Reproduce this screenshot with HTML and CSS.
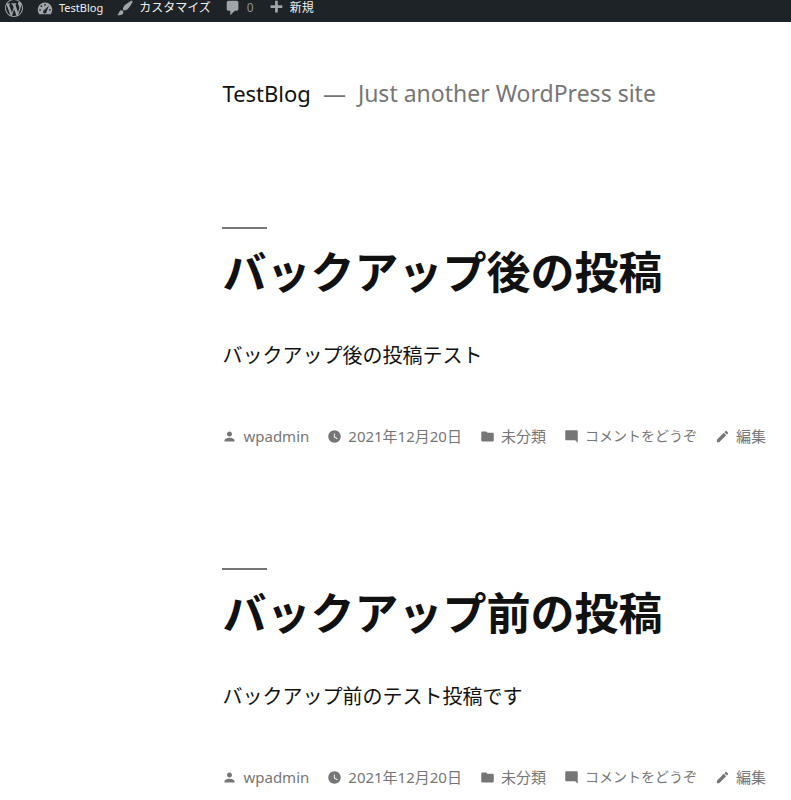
FILE: index.html
```html
<!DOCTYPE html>
<html lang="ja">
  <head>
    <meta charset="UTF-8" />
    <meta name="viewport" content="width=device-width, initial-scale=1" />
    <title>TestBlog</title>
    <link rel="stylesheet" href="styles.css">
  </head>
  <body>
    <!-- shared icons -->
    <svg class="sprite" aria-hidden="true">
      <symbol id="icon-person" viewBox="0 0 24 24"><path d="M12 12c2.21 0 4-1.79 4-4s-1.79-4-4-4-4 1.79-4 4 1.79 4 4 4zm0 2c-2.67 0-8 1.34-8 4v2h16v-2c0-2.66-5.33-4-8-4z" /></symbol>
      <symbol id="icon-clock" viewBox="0 0 24 24"><path d="M12 2C6.5 2 2 6.500 2 12s4.500 10 10 10 10-4.500 10-10S17.500 2 12 2zm4.200 14.200L11 13V7h1.500v5.200l4.500 2.700-.8 1.300z" /></symbol>
      <symbol id="icon-folder" viewBox="0 0 24 24"><path d="M10 4H4c-1.100 0-1.990.9-1.990 2L2 18c0 1.100.9 2 2 2h16c1.100 0 2-.9 2-2V8c0-1.100-.9-2-2-2h-8l-2-2z" /></symbol>
      <symbol id="icon-comment" viewBox="0 0 24 24"><path d="M21.990 4c0-1.100-.89-2-1.990-2H4c-1.100 0-2 .9-2 2v12c0 1.100.9 2 2 2h14l4 4-.01-18z" /></symbol>
      <symbol id="icon-edit" viewBox="0 0 24 24"><path d="M3 17.250V21h3.750L17.810 9.940l-3.750-3.750L3 17.250zM20.710 7.040c.39-.39.39-1.020 0-1.410l-2.340-2.340c-.39-.39-1.020-.39-1.410 0l-1.830 1.830 3.750 3.750 1.830-1.830z" /></symbol>
    </svg>

    <nav class="adminbar" aria-label="ツールバー">
      <a href="#" aria-label="WordPress">
        <svg class="bar-icon" viewBox="0 0 20 20"><path d="M20 10c0-5.510-4.490-10-10-10C4.480 0 0 4.490 0 10c0 5.520 4.480 10 10 10 5.510 0 10-4.480 10-10zM7.780 15.370L4.370 6.220c.55-.02 1.170-.08 1.170-.08.5-.06.44-1.130-.06-1.110 0 0-1.450.11-2.370.11-.18 0-.37 0-.58-.01C4.120 2.690 6.870 1.110 10 1.110c2.330 0 4.450.87 6.050 2.340-.68-.11-1.650.39-1.650 1.580 0 .74.45 1.360.9 2.100.35.61.55 1.360.55 2.460 0 1.490-1.400 5-1.400 5l-3.030-8.370c.54-.02.82-.17.82-.17.5-.05.44-1.250-.06-1.220 0 0-1.440.12-2.380.12-.87 0-2.330-.12-2.330-.12-.5-.03-.56 1.200-.06 1.220l.92.08 1.260 3.410zM17.410 10c.24-.64.74-1.870.43-4.250.7 1.290 1.050 2.710 1.050 4.250 0 3.290-1.730 6.240-4.400 7.780.97-2.590 1.940-5.200 2.920-7.780zM6.100 18.090C3.120 16.650 1.110 13.530 1.110 10c0-1.300.23-2.480.72-3.590C3.250 10.300 4.670 14.200 6.100 18.090zm4.030-6.630l2.580 6.980c-.86.29-1.760.45-2.710.45-.79 0-1.570-.11-2.290-.33.81-2.380 1.620-4.740 2.420-7.100z" /></svg>
      </a>
      <a href="#" class="bar-site">
        <svg class="bar-icon" viewBox="0 0 20 20">
          <path d="M3.760 17h12.480C17.340 15.630 18 13.890 18 12c0-4.410-3.580-8-8-8s-8 3.590-8 8c0 1.890.66 3.630 1.760 5z" />
          <g class="bar-cut">
            <circle cx="10" cy="6.500" r="1" />
            <circle cx="6" cy="8" r="1" />
            <circle cx="4.500" cy="12" r="1" />
            <circle cx="15.500" cy="12" r="1" />
            <path d="M14.500 7.200l-2.700 6.500a2 2 0 1 1-2.500-1.500z" />
          </g>
        </svg>
        TestBlog
      </a>
      <a href="#">
        <svg class="bar-icon" viewBox="0 0 20 20"><path d="M18.330 3.570s.27-.8-.31-1.360c-.53-.52-1.220-.24-1.220-.24-.61.3-5.760 3.470-7.670 5.570-.86.96-2.060 3.790-1.090 4.820.92.98 3.960-.17 4.790-1 2.060-2.060 5.210-7.170 5.500-7.790zM1.400 17.650c2.370-1.560 1.460-3.410 3.230-4.640.93-.65 2.220-.62 3.080.29.63.67.8 2.570-.16 3.460-1.570 1.450-4 1.550-6.150.89z" /></svg>
        カスタマイズ
      </a>
      <a href="#" class="bar-comments">
        <svg class="bar-icon" viewBox="0 0 20 20"><path d="M5 2h9c1.100 0 2 .9 2 2v7c0 1.100-.9 2-2 2h-2l-5 5v-5H5c-1.100 0-2-.9-2-2V4c0-1.100.9-2 2-2z" /></svg>
        0
      </a>
      <a href="#">
        <svg class="bar-icon" viewBox="0 0 20 20"><path d="M17 7v3h-5v5H9v-5H4V7h5V2h3v5h5z" /></svg>
        新規
      </a>
    </nav>

    <div class="site">
      <header class="site-header">
        <a href="#" class="site-title">TestBlog</a>
        <span>—</span>
        <span>Just another WordPress site</span>
      </header>

      <main>
        <article class="entry">
          <h2 class="entry-title"><a href="#">バックアップ後の投稿</a></h2>
          <p class="entry-content">バックアップ後の投稿テスト</p>
          <footer class="entry-footer">
            <a href="#"><svg><use href="#icon-person" /></svg>wpadmin</a>
            <a href="#"><svg><use href="#icon-clock" /></svg><time datetime="2021-12-20">2021年12月20日</time></a>
            <a href="#"><svg><use href="#icon-folder" /></svg>未分類</a>
            <a href="#" class="comments-link"><svg><use href="#icon-comment" /></svg>コメントをどうぞ</a>
            <a href="#"><svg><use href="#icon-edit" /></svg>編集</a>
          </footer>
        </article>

        <article class="entry">
          <h2 class="entry-title"><a href="#">バックアップ前の投稿</a></h2>
          <p class="entry-content">バックアップ前のテスト投稿です</p>
          <footer class="entry-footer">
            <a href="#"><svg><use href="#icon-person" /></svg>wpadmin</a>
            <a href="#"><svg><use href="#icon-clock" /></svg><time datetime="2021-12-20">2021年12月20日</time></a>
            <a href="#"><svg><use href="#icon-folder" /></svg>未分類</a>
            <a href="#" class="comments-link"><svg><use href="#icon-comment" /></svg>コメントをどうぞ</a>
            <a href="#"><svg><use href="#icon-edit" /></svg>編集</a>
          </footer>
        </article>
      </main>
    </div>
  </body>
</html>
```
FILE: styles.css
```css
* {
  box-sizing: border-box;
}
body {
  margin: 0;
  background: #fff;
  color: #111;
  font-family: "Noto Sans", "Noto Sans CJK JP", sans-serif;
}
a {
  color: inherit;
  text-decoration: none;
}
.sprite {
  display: none;
}

/* admin toolbar */
.adminbar {
  display: flex;
  align-items: center;
  gap: 13px;
  height: 22px;
  padding: 0 5px 6px;
  background: #1d2327;
  color: #f0f0f1;
  font-size: 12px;
  line-height: 18px;
  white-space: nowrap;
}
.adminbar a {
  display: flex;
  align-items: center;
  gap: 5px;
}
.adminbar .bar-site {
  font-size: 11px;
}
.adminbar .bar-comments {
  color: #8c9196;
}
.bar-icon {
  flex: none;
  width: 18px;
  height: 18px;
  fill: #a0a5aa;
}
.bar-cut {
  fill: #1d2327;
}

/* page */
.site {
  padding-left: calc(28% + 1px);
}
.site-header {
  display: flex;
  align-items: baseline;
  gap: 12px;
  padding: 53px 0 116px;
  color: #767676;
  font-size: 23px;
  line-height: 36px;
}
.site-title {
  color: #111;
  font-size: 22px;
}
.entry {
  margin-bottom: 120px;
}
.entry:last-child {
  margin-bottom: 0;
}
.entry-title {
  margin: 0;
  font-size: 44px;
  font-weight: 700;
  line-height: 56px;
}
.entry-title::before {
  content: "";
  display: block;
  width: 45px;
  height: 2px;
  margin-bottom: 15px;
  background: #767676;
}
.entry-content {
  margin: 40px 0 0;
  font-size: 20px;
  line-height: 32px;
}
.entry-footer {
  display: flex;
  flex-wrap: wrap;
  gap: 18px;
  margin-top: 52px;
  color: #767676;
  font-size: 15px;
  line-height: 24px;
}
.entry-footer a {
  display: flex;
  align-items: center;
  gap: 6px;
}
.entry-footer .comments-link {
  font-size: 14px;
}
.entry-footer svg {
  width: 15px;
  height: 15px;
  fill: currentColor;
}
```
